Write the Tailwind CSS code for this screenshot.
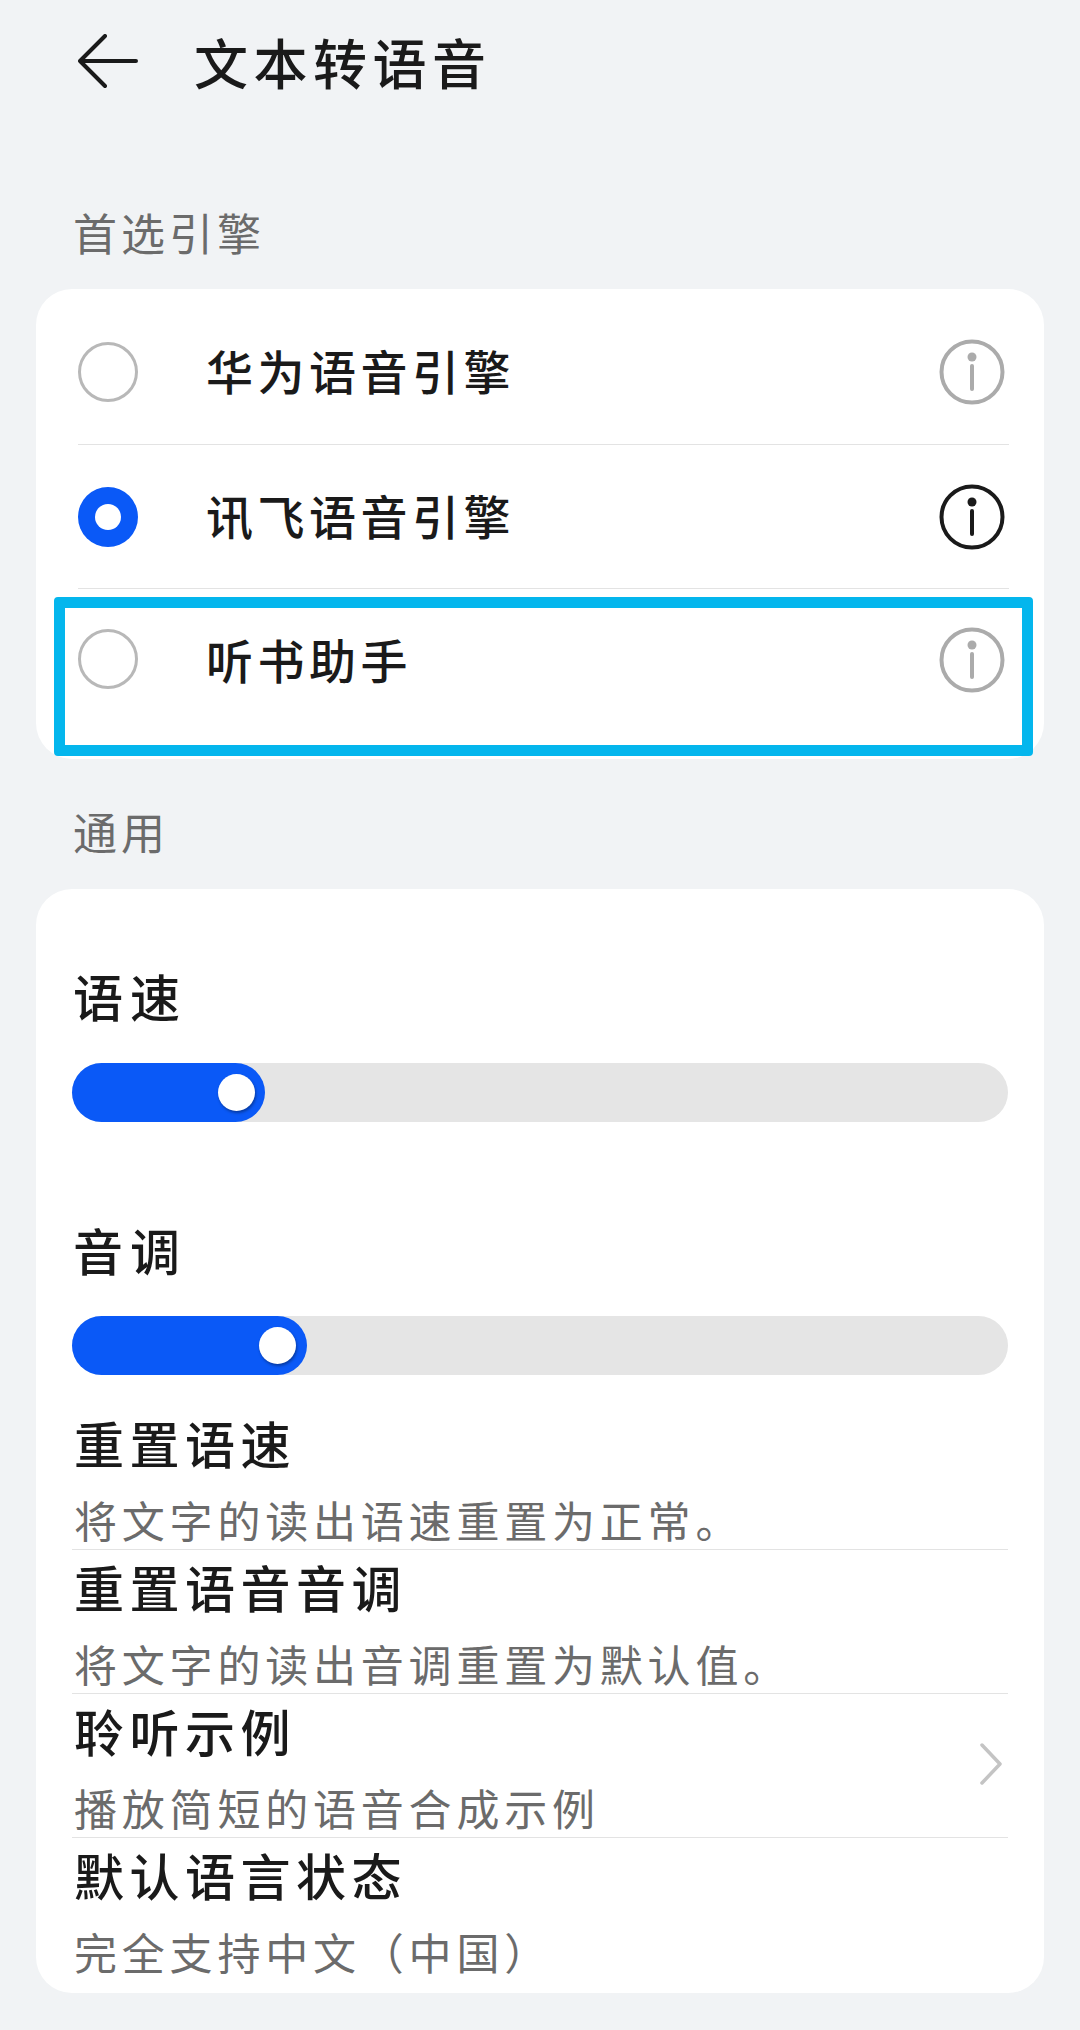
<!doctype html>
<html lang="zh">
<head>
<meta charset="utf-8">
<script src="https://cdn.jsdelivr.net/npm/@tailwindcss/browser@4"></script>
</head>
<body class="m-0 bg-[#f1f3f5]">
<div class="w-[1080px] h-[2030px] bg-[#f1f3f5] font-['Noto_Sans_CJK_SC','Noto_Sans',sans-serif] text-[#1a1a1a] overflow-hidden">
  <header class="h-[124px] flex items-center pl-[78px]">
    <svg class="w-[60px] h-[56px]" viewBox="0 0 60 56" fill="none" stroke="#1a1a1a" stroke-width="4" stroke-linecap="round" stroke-linejoin="round"><path d="M2 27H58M27 2L2 27L27 52"/></svg>
    <h1 class="ml-[56px] text-[54px] leading-[60px] tracking-[5.5px] font-medium">文本转语音</h1>
  </header>
  <div class="h-[165px] px-[73px] pb-[29px] flex items-end">
    <h2 class="text-[44px] leading-[56px] tracking-[4px] text-[#6b6b6b]">首选引擎</h2>
  </div>
  <main class="mx-[36px] flex flex-col">
    <section class="relative bg-white rounded-[36px] h-[470px] flex flex-col">
      <div class="h-[156px] ml-[42px] mr-[35px] pt-[10px] flex items-center border-b border-[#e3e3e3]">
        <span class="w-[60px] h-[60px] rounded-full border-[3px] border-[#b8b8b8]"></span>
        <span class="ml-[68px] -mt-[4px] text-[47px] leading-[60px] tracking-[4.5px] font-medium">华为语音引擎</span>
        <svg class="ml-auto mr-[4px] w-[66px] h-[66px]" viewBox="0 0 66 66" fill="none" stroke="#ababab" stroke-width="4" stroke-linecap="round"><circle cx="33" cy="33" r="30.5"/><path d="M33 27V50"/><circle cx="33" cy="18" r="4.5" fill="#ababab" stroke="none"/></svg>
      </div>
      <div class="h-[144px] ml-[42px] mr-[35px] flex items-center border-b border-[#e3e3e3]">
        <span class="w-[60px] h-[60px] rounded-full bg-[#0a59f7] flex items-center justify-center"><span class="w-[26px] h-[26px] rounded-full bg-white"></span></span>
        <span class="ml-[68px] -mt-[4px] text-[47px] leading-[60px] tracking-[4.5px] font-medium">讯飞语音引擎</span>
        <svg class="ml-auto mr-[4px] w-[66px] h-[66px]" viewBox="0 0 66 66" fill="none" stroke="#1a1a1a" stroke-width="4" stroke-linecap="round"><circle cx="33" cy="33" r="30.5"/><path d="M33 27V50"/><circle cx="33" cy="18" r="4.5" fill="#1a1a1a" stroke="none"/></svg>
      </div>
      <div class="flex-1 ml-[42px] mr-[35px] pt-[40px] flex items-start">
        <span class="w-[60px] h-[60px] rounded-full border-[3px] border-[#b8b8b8]"></span>
        <span class="ml-[68px] text-[47px] leading-[60px] tracking-[4.5px] font-medium">听书助手</span>
        <svg class="ml-auto mr-[4px] -mt-[2px] w-[66px] h-[66px]" viewBox="0 0 66 66" fill="none" stroke="#ababab" stroke-width="4" stroke-linecap="round"><circle cx="33" cy="33" r="30.5"/><path d="M33 27V50"/><circle cx="33" cy="18" r="4.5" fill="#ababab" stroke="none"/></svg>
      </div>
      <div class="absolute left-[18px] top-[308px] w-[979px] h-[159px] border-[11px] border-[#04b6ed] rounded-[4px]"></div>
    </section>
    <div class="h-[130px] px-[37px] pb-[30px] flex items-end">
      <h2 class="text-[44px] leading-[56px] tracking-[4px] text-[#6b6b6b]">通用</h2>
    </div>
    <section class="bg-white rounded-[36px] h-[1104px] px-[36px] pt-[76px] flex flex-col">
      <div class="text-[50px] leading-[60px] tracking-[7px] pl-[1px] font-medium">语速</div>
      <div class="relative mt-[38px] h-[59px] rounded-full bg-[#e5e5e5]">
        <div class="w-[193px] h-full rounded-full bg-[#0a59f7]"></div>
        <span class="absolute left-[146px] top-[11px] w-[37px] h-[37px] rounded-full bg-white shadow-[1px_2px_3px_rgba(0,0,0,0.35)]"></span>
      </div>
      <div class="mt-[97px] text-[50px] leading-[60px] tracking-[7px] pl-[1px] font-medium">音调</div>
      <div class="relative mt-[37px] h-[59px] rounded-full bg-[#e5e5e5]">
        <div class="w-[235px] h-full rounded-full bg-[#0a59f7]"></div>
        <span class="absolute left-[187px] top-[11px] w-[37px] h-[37px] rounded-full bg-white shadow-[1px_2px_3px_rgba(0,0,0,0.35)]"></span>
      </div>
      <div class="mt-[31px] h-[144px] pt-[6px] border-b border-[#e3e3e3]">
        <div class="text-[50px] leading-[60px] tracking-[5.5px] pl-[2px] font-medium">重置语速</div>
        <div class="mt-[23px] text-[43px] leading-[48px] tracking-[4.8px] pl-[2px] text-[#6b6b6b]">将文字的读出语速重置为正常。</div>
      </div>
      <div class="h-[144px] pt-[6px] border-b border-[#e3e3e3]">
        <div class="text-[50px] leading-[60px] tracking-[5.5px] pl-[2px] font-medium">重置语音音调</div>
        <div class="mt-[23px] text-[43px] leading-[48px] tracking-[4.8px] pl-[2px] text-[#6b6b6b]">将文字的读出音调重置为默认值。</div>
      </div>
      <div class="h-[144px] pt-[6px] border-b border-[#e3e3e3] flex items-center justify-between">
        <div class="self-start">
          <div class="text-[50px] leading-[60px] tracking-[5.5px] pl-[2px] font-medium">聆听示例</div>
          <div class="mt-[23px] text-[43px] leading-[48px] tracking-[4.8px] pl-[2px] text-[#6b6b6b]">播放简短的语音合成示例</div>
        </div>
        <svg class="mr-[6px] mb-[10px] w-[22px] h-[42px]" viewBox="0 0 22 42" fill="none" stroke="#c4c4c4" stroke-width="3.5" stroke-linecap="round" stroke-linejoin="round"><path d="M2 2L20 21L2 40"/></svg>
      </div>
      <div class="pt-[6px]">
        <div class="text-[50px] leading-[60px] tracking-[5.5px] pl-[2px] font-medium">默认语言状态</div>
        <div class="mt-[23px] text-[43px] leading-[48px] tracking-[4.8px] pl-[2px] text-[#6b6b6b]">完全支持中文（中国）</div>
      </div>
    </section>
  </main>
</div>
</body>
</html>
